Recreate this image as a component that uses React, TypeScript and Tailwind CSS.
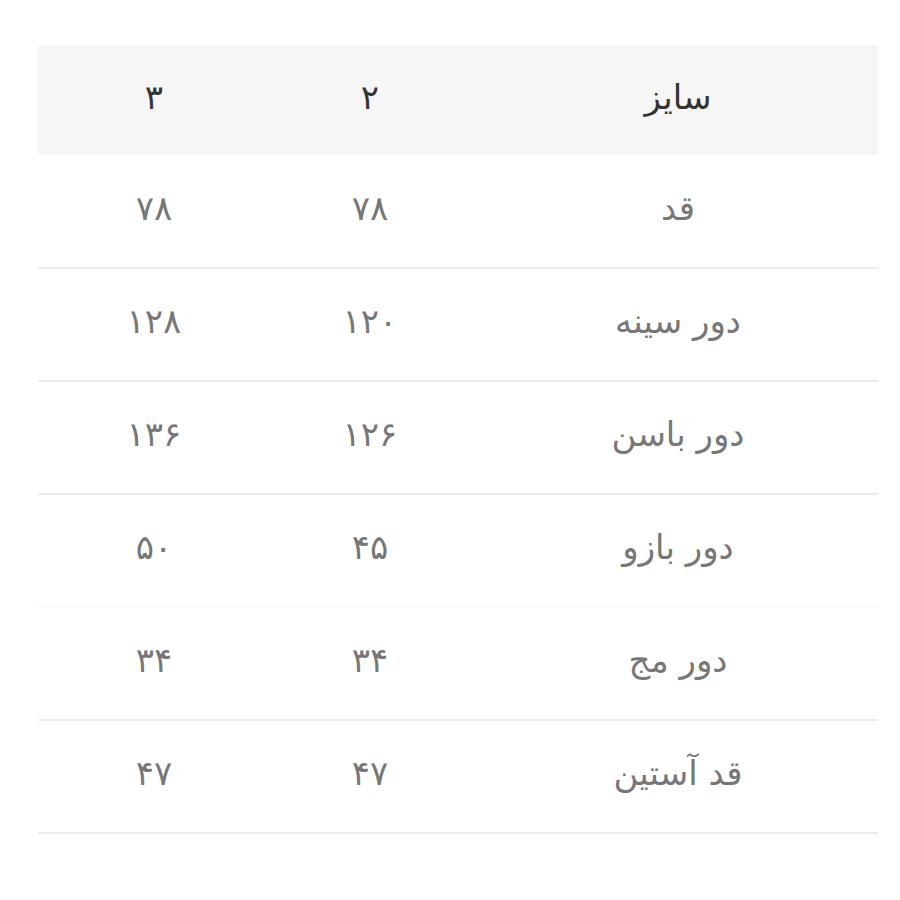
import React from 'react';

const rows: { label: string; a: string; b: string; faint?: boolean }[] = [
  { label: 'قد', a: '۷۸', b: '۷۸' },
  { label: 'دور سینه', a: '۱۲۰', b: '۱۲۸' },
  { label: 'دور باسن', a: '۱۲۶', b: '۱۳۶' },
  { label: 'دور بازو', a: '۴۵', b: '۵۰', faint: true },
  { label: 'دور مج', a: '۳۴', b: '۳۴' },
  { label: 'قد آستین', a: '۴۷', b: '۴۷' },
];

export default function App() {
  return (
    <div className="min-h-[900px] bg-white pt-[45px] pr-[22px]" dir="rtl" style={{ fontFamily: '"DejaVu Sans", "Noto Sans", sans-serif' }}>
      <table className="w-[840px] border-collapse text-[34px]">
        <thead>
          <tr className="h-[110px] bg-[#f6f6f6] text-[#333]">
            <th className="w-[400px] pb-[6px] text-center font-normal">سایز</th>
            <th className="w-[216px] pb-[6px] text-center font-normal">۲</th>
            <th className="pb-[6px] pl-[8px] text-center font-normal">۳</th>
          </tr>
        </thead>
        <tbody>
          {rows.map((r) => (
            <tr key={r.label} className={`h-[113px] border-b-2 text-[#777] ${r.faint ? 'border-[#fafafa]' : 'border-[#ececec]'}`}>
              <td className="pb-[6px] text-center">{r.label}</td>
              <td className="pb-[6px] text-center">{r.a}</td>
              <td className="pb-[6px] pl-[8px] text-center">{r.b}</td>
            </tr>
          ))}
        </tbody>
      </table>
    </div>
  );
}
